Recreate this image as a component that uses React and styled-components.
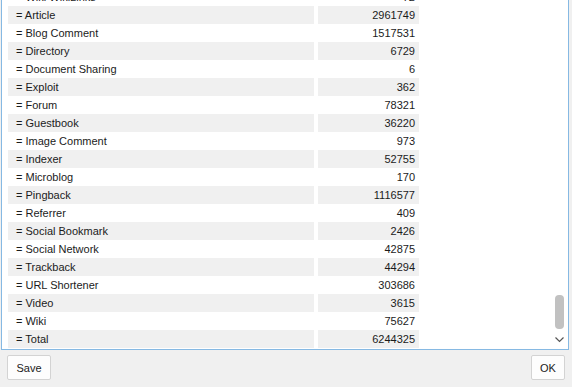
import { useLayoutEffect, useRef } from 'react';
import styled, { createGlobalStyle } from 'styled-components';

const GlobalStyle = createGlobalStyle`
  html, body {
    margin: 0;
    padding: 0;
    background: #f0f0f0;
    overflow: hidden;
  }
  * { box-sizing: border-box; }
`;

const Window = styled.div`
  width: 572px;
  height: 387px;
  display: flex;
  flex-direction: column;
  background: #f0f0f0;
  font-family: "Liberation Sans", Arial, sans-serif;
  font-size: 11px;
  color: #1b1b1b;
`;

const Panel = styled.div`
  height: 350px;
  margin: 0 3px 0 1px;
  display: flex;
  background: #fff;
  border: 1px solid #86b9e3;
  border-top: none;
`;

const List = styled.div`
  flex: 1;
  overflow: hidden;
  padding-left: 6px;
`;

const Row = styled.div`
  display: grid;
  grid-template-columns: 306px 101px;
  column-gap: 4px;
  height: 18px;
  line-height: 18px;
`;

const Cell = styled.div`
  background: ${(p) => (p.$striped ? '#f0f0f0' : '#fff')};
  padding: ${(p) => (p.$num ? '0 4px 0 0' : '0 0 0 8px')};
  text-align: ${(p) => (p.$num ? 'right' : 'left')};
  white-space: nowrap;
  overflow: hidden;
`;

const ScrollTrack = styled.div`
  width: 17px;
  display: flex;
  flex-direction: column;
  justify-content: flex-end;
  align-items: center;
  padding-bottom: 4px;
`;

const Thumb = styled.div`
  width: 9px;
  height: 34px;
  border-radius: 4px;
  background: #c1c1c1;
  margin-bottom: 5px;
`;

const Arrow = styled.svg`
  width: 11px;
  height: 11px;
`;

const Footer = styled.div`
  flex: 1;
  display: flex;
  justify-content: space-between;
  align-items: flex-start;
  padding: 5px 7px 0 7px;
`;

const Button = styled.button`
  height: 25px;
  min-width: ${(p) => p.$w}px;
  padding: 0 8px;
  background: #fdfdfd;
  border: 1px solid #d3d3d3;
  border-radius: 2px;
  font-family: inherit;
  font-size: 11px;
  color: #1b1b1b;
`;

const rows = [
  ['= Wiki WikiLinks', '72'],
  ['= Article', '2961749'],
  ['= Blog Comment', '1517531'],
  ['= Directory', '6729'],
  ['= Document Sharing', '6'],
  ['= Exploit', '362'],
  ['= Forum', '78321'],
  ['= Guestbook', '36220'],
  ['= Image Comment', '973'],
  ['= Indexer', '52755'],
  ['= Microblog', '170'],
  ['= Pingback', '1116577'],
  ['= Referrer', '409'],
  ['= Social Bookmark', '2426'],
  ['= Social Network', '42875'],
  ['= Trackback', '44294'],
  ['= URL Shortener', '303686'],
  ['= Video', '3615'],
  ['= Wiki', '75627'],
  ['= Total', '6244325'],
];

export default function App() {
  const listRef = useRef(null);

  // list is scrolled down so the first row only peeks in at the top
  useLayoutEffect(() => {
    if (listRef.current) listRef.current.scrollTop = 12;
  }, []);

  return (
    <Window>
      <GlobalStyle />
      <Panel>
        <List ref={listRef}>
          {rows.map(([label, value], i) => (
            <Row key={label}>
              <Cell $striped={i % 2 === 1}>{label}</Cell>
              <Cell $striped={i % 2 === 1} $num>{value}</Cell>
            </Row>
          ))}
          <Row />
        </List>
        <ScrollTrack>
          <Thumb />
          <Arrow viewBox="0 0 11 11">
            <path d="M1.5 3.5 L5.5 7.5 L9.5 3.5" fill="none" stroke="#555" strokeWidth="1.2" />
          </Arrow>
        </ScrollTrack>
      </Panel>
      <Footer>
        <Button $w={44}>Save</Button>
        <Button $w={34}>OK</Button>
      </Footer>
    </Window>
  );
}
